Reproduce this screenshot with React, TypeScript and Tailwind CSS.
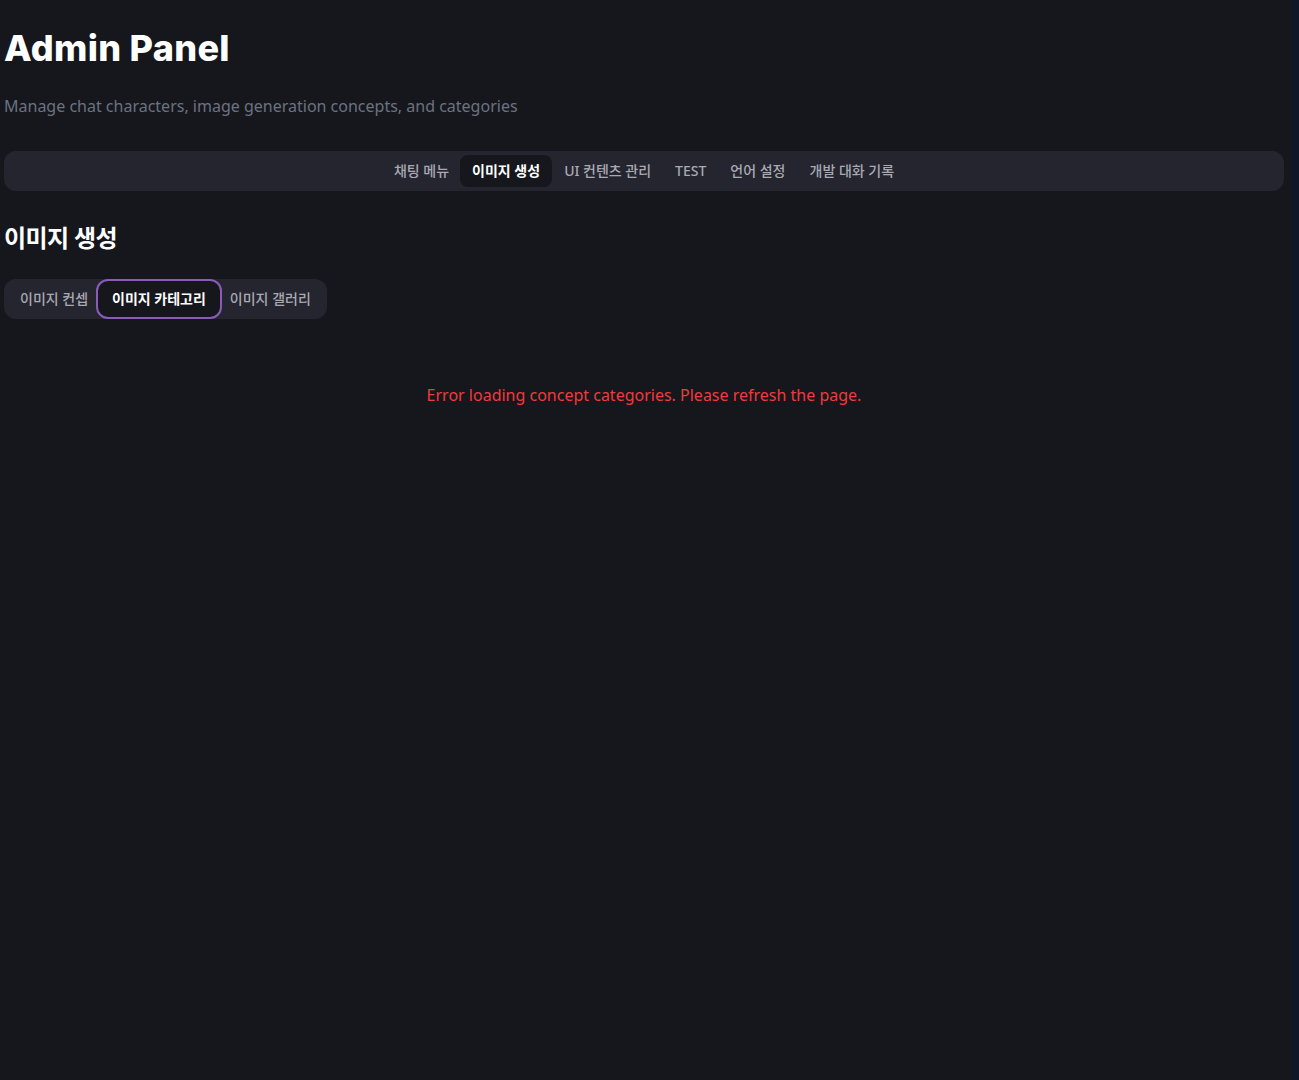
import { useState } from "react"

const font = { fontFamily: '"Noto Sans", "Noto Sans CJK KR", sans-serif' }

const mainTabs = ["채팅 메뉴", "이미지 생성", "UI 컨텐츠 관리", "TEST", "언어 설정", "개발 대화 기록"]
const subTabs = ["이미지 컨셉", "이미지 카테고리", "이미지 갤러리"]

export default function App() {
  const [tab, setTab] = useState("이미지 생성")
  const [sub, setSub] = useState("이미지 카테고리")

  return (
    <div className="flex min-h-[1080px] bg-[#0e1628]" style={font}>
      <main className="w-[1291px] shrink-0 bg-[#16171d] pl-1 pr-[7px] pt-[26px]">
        {/* Header */}
        <h1 className="text-[36px] leading-[44px] font-extrabold tracking-[0.3px] text-white font-[Inter,sans-serif]">
          Admin Panel
        </h1>
        <p className="mt-[24px] text-[16px] leading-6 text-[#6b7280]">
          Manage chat characters, image generation concepts, and categories
        </p>

        {/* Main tabs */}
        <nav className="mt-[33px] flex h-10 items-center justify-center rounded-xl bg-[#25252f] px-1">
          {mainTabs.map((t) => (
            <button
              key={t}
              onClick={() => setTab(t)}
              className={
                t === tab
                  ? "-ml-px h-8 rounded-lg bg-[#16171d] px-3 text-sm font-semibold text-white"
                  : "h-8 rounded-lg px-3 text-sm font-medium text-[#a9a9b3]"
              }
            >
              {t}
            </button>
          ))}
        </nav>

        {/* Section */}
        <h2 className="mt-[31px] text-2xl leading-8 font-bold tracking-tight text-white">이미지 생성</h2>

        <div className="mt-[25px] inline-flex h-10 items-center rounded-xl bg-[#25252f] px-1">
          {subTabs.map((t) => (
            <button
              key={t}
              onClick={() => setSub(t)}
              className={
                t === sub
                  ? "-mx-1 h-10 rounded-xl border-2 border-[#8a5cb8] bg-[#16171d] px-[14px] text-sm font-semibold text-white"
                  : "h-8 px-3 text-sm font-medium text-[#a9a9b3]"
              }
            >
              {t}
            </button>
          ))}
        </div>

        <p className="mt-[64px] text-center text-[16px] leading-6 text-[#ef3b3b]">
          Error loading concept categories. Please refresh the page.
        </p>
      </main>
    </div>
  )
}
